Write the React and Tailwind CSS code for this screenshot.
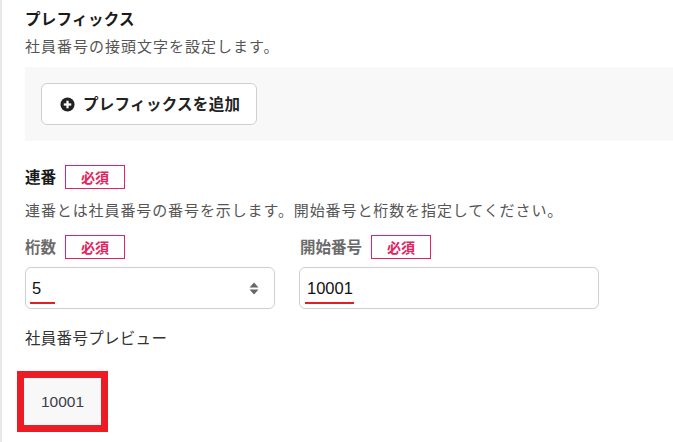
import React from "react";

const jp = { fontFamily: '"Noto Sans CJK JP", "Noto Sans", sans-serif' };

function Badge() {
  return (
    <span className="inline-flex items-center justify-center w-[60px] h-[24px] border border-[#e0245e] text-[#e0245e] text-[14px] font-bold leading-none">
      必須
    </span>
  );
}

function Underlined({ children, w }) {
  return (
    <span className="relative inline-block">
      {children}
      <span className="absolute left-[-2px] bottom-[-4px] h-[2px] bg-[#e41e26]" style={{ width: w }} />
    </span>
  );
}

export default function App() {
  return (
    <div className="w-[673px] h-[442px] bg-white overflow-hidden border-l-2 border-[#e8e8e8] text-[#222]" style={jp}>
      <div className="pl-[23px]">
        <div className="pt-[6px] text-[15.5px] tracking-[0.3px] font-bold leading-[24px] text-[#1a1a1a]">プレフィックス</div>
        <div className="mt-[4px] text-[15px] tracking-[1px] leading-[24px] text-[#555]">社員番号の接頭文字を設定します。</div>
        <div className="mt-[9px] h-[74px] bg-[#f8f8f8] pl-[16px] flex items-center">
          <button className="h-[42px] w-[216px] bg-white border border-[#cfcfcf] rounded-[6px] flex items-center pl-[18px] gap-[8px] text-[15.5px] tracking-[0.3px] font-bold text-[#222]">
            <svg width="15" height="15" viewBox="0 0 16 16">
              <circle cx="8" cy="8" r="7.5" fill="#222" />
              <rect x="4" y="6.8" width="8" height="2.4" fill="#fff" />
              <rect x="6.8" y="4" width="2.4" height="8" fill="#fff" />
            </svg>
            <span>プレフィックスを追加</span>
          </button>
        </div>
        <div className="mt-[24px] flex items-center gap-[9px]">
          <span className="text-[15.5px] font-bold text-[#1a1a1a]">連番</span>
          <Badge />
        </div>
        <div className="mt-[9px] text-[15px] tracking-[0.9px] leading-[24px] text-[#555]">
          連番とは社員番号の番号を示します。開始番号と桁数を指定してください。
        </div>
        <div className="mt-[13px] flex gap-[24px]">
          <div className="w-[250px]">
            <div className="flex items-center gap-[9px]">
              <span className="text-[15.5px] font-bold text-[#6b6b6b]">桁数</span>
              <Badge />
            </div>
            <div className="mt-[8px] h-[42px] border border-[#cfcfcf] rounded-[6px] flex items-center justify-between pl-[6px] pr-[15px]">
              <span className="text-[16.5px] text-[#111]" style={{ fontFamily: '"Liberation Sans", Arial, sans-serif' }}>
                <Underlined w="25px">5</Underlined>
              </span>
              <svg width="10" height="13" viewBox="0 0 10 13">
                <path d="M5 0.5 L9.5 5.5 L0.5 5.5 Z" fill="#666" />
                <path d="M5 12.5 L9.5 7.5 L0.5 7.5 Z" fill="#666" />
              </svg>
            </div>
          </div>
          <div className="w-[300px]">
            <div className="flex items-center gap-[9px]">
              <span className="text-[15.5px] font-bold text-[#6b6b6b] ml-[1px]">開始番号</span>
              <Badge />
            </div>
            <div className="mt-[8px] h-[42px] border border-[#cfcfcf] rounded-[6px] flex items-center pl-[7px]">
              <span className="text-[16.5px] text-[#111]" style={{ fontFamily: '"Liberation Sans", Arial, sans-serif' }}>
                <Underlined w="49px">10001</Underlined>
              </span>
            </div>
          </div>
        </div>
        <div className="mt-[16px] text-[15.5px] tracking-[0.3px] leading-[24px] text-[#333]">社員番号プレビュー</div>
      </div>
      <div className="pl-[15px] mt-[22px]">
        <div className="w-[91px] h-[61px] border-[7px] border-[#ec1c24] bg-[#f8f8f8] flex items-center justify-center text-[15.5px] text-[#3c3c4c]" style={{ fontFamily: '"Liberation Sans", Arial, sans-serif' }}>
          10001
        </div>
      </div>
    </div>
  );
}
